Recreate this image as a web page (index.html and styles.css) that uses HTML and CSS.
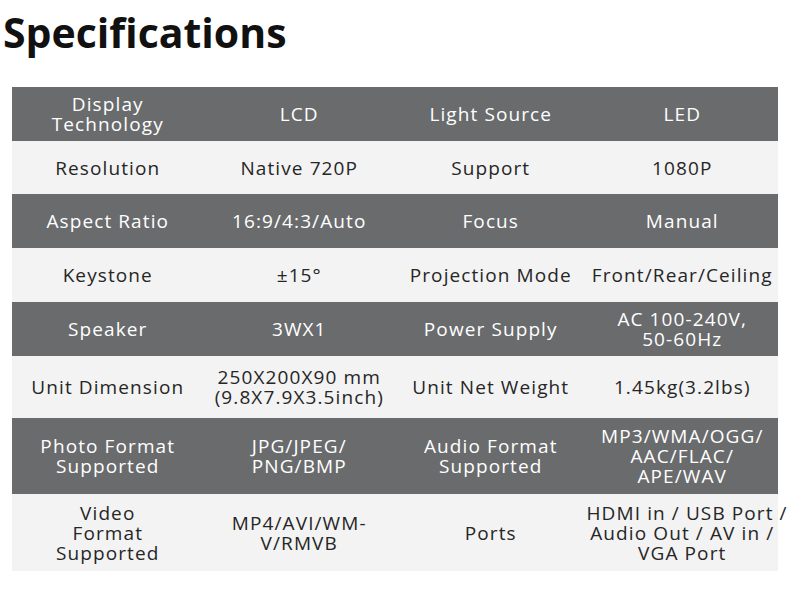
FILE: index.html
```html
<!DOCTYPE html>
<html>
<head>
<meta charset="utf-8">
<link rel="stylesheet" href="styles.css">
</head>
<body>
<div class="page">
  <h1 class="title">Specifications</h1>
  <table class="specs">
    <tr class="dark h54"><td>Display<br>Technology</td><td>LCD</td><td>Light Source</td><td>LED</td></tr>
    <tr class="light h53"><td>Resolution</td><td>Native 720P</td><td>Support</td><td>1080P</td></tr>
    <tr class="dark h54"><td>Aspect Ratio</td><td>16:9/4:3/Auto</td><td>Focus</td><td>Manual</td></tr>
    <tr class="light h54"><td>Keystone</td><td>±15°</td><td>Projection Mode</td><td>Front/Rear/Ceiling</td></tr>
    <tr class="dark h54"><td>Speaker</td><td>3WX1</td><td>Power Supply</td><td>AC 100-240V,<br>50-60Hz</td></tr>
    <tr class="light h62"><td>Unit Dimension</td><td>250X200X90 mm<br>(9.8X7.9X3.5inch)</td><td>Unit Net Weight</td><td>1.45kg(3.2lbs)</td></tr>
    <tr class="dark h76"><td>Photo Format<br>Supported</td><td>JPG/JPEG/<br>PNG/BMP</td><td>Audio Format<br>Supported</td><td>MP3/WMA/OGG/<br>AAC/FLAC/<br>APE/WAV</td></tr>
    <tr class="light h77"><td>Video<br>Format<br>Supported</td><td>MP4/AVI/WM-<br>V/RMVB</td><td>Ports</td><td>HDMI in / USB Port /<br>Audio Out / AV in /<br>VGA Port</td></tr>
  </table>
</div>
</body>
</html>
```
FILE: styles.css
```css
html, body {
  margin: 0;
  padding: 0;
  background: #ffffff;
}
.page {
  width: 802px;
  font-family: "Open Sans", "DejaVu Sans", sans-serif;
}
.title {
  margin: 0;
  padding: 8px 0 0 3px;
  height: 79px;
  box-sizing: border-box;
  font-family: "Open Sans", sans-serif;
  font-weight: 700;
  font-size: 41px;
  line-height: 48px;
  color: #111111;
}
.specs {
  margin: 8px 0 0 12px;
  width: 766px;
  border-collapse: collapse;
  table-layout: fixed;
}
.specs td {
  padding: 0;
  text-align: center;
  vertical-align: middle;
  font-size: 19px;
  line-height: 20px;
  letter-spacing: 1.1px;
  white-space: nowrap;
}
.dark td {
  background: #6a6b6d;
  color: #ffffff;
}
.light td {
  background: #f3f3f3;
  color: #262626;
}
.h53 { height: 53px; }
.h54 { height: 54px; }
.h62 { height: 62px; }
.h76 { height: 76px; }
.h77 { height: 77px; }
```
